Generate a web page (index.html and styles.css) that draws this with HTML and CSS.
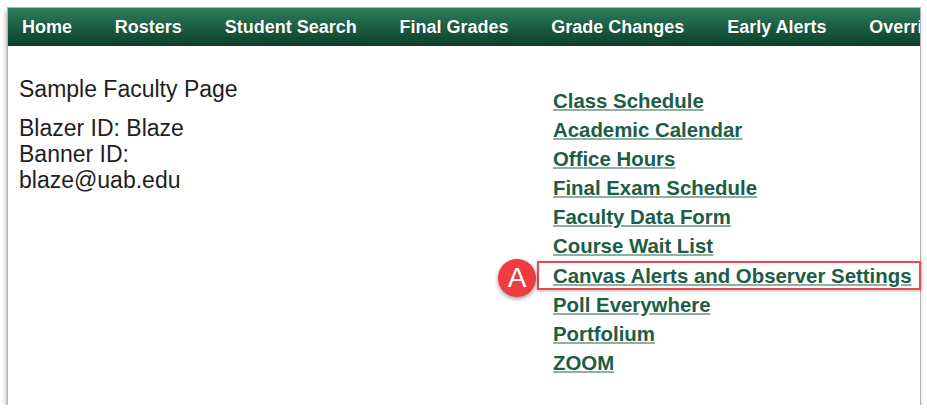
FILE: index.html
```html
<!DOCTYPE html>
<html lang="en">
<head>
  <meta charset="UTF-8" />
  <title>Sample Faculty Page</title>
  <link rel="stylesheet" href="styles.css">
</head>
<body>
  <div class="frame">
    <div class="nav">
      <a href="#">Home</a>
      <a href="#">Rosters</a>
      <a href="#">Student Search</a>
      <a href="#">Final Grades</a>
      <a href="#">Grade Changes</a>
      <a href="#">Early Alerts</a>
      <a href="#">Overrides</a>
    </div>

    <div class="content">
      <div class="profile">
        <p class="title">Sample Faculty Page</p>
        <p>Blazer ID: Blaze<br>Banner ID:<br>blaze@uab.edu</p>
      </div>

      <ul class="links">
        <li><a href="#">Class Schedule</a></li>
        <li><a href="#">Academic Calendar</a></li>
        <li><a href="#">Office Hours</a></li>
        <li><a href="#">Final Exam Schedule</a></li>
        <li><a href="#">Faculty Data Form</a></li>
        <li><a href="#">Course Wait List</a></li>
        <li><a href="#" class="marked">Canvas Alerts and Observer Settings<span class="badge">A</span></a></li>
        <li><a href="#">Poll Everywhere</a></li>
        <li><a href="#">Portfolium</a></li>
        <li><a href="#">ZOOM</a></li>
      </ul>
    </div>
  </div>
</body>
</html>
```

FILE: styles.css
```css
body {
  margin: 0;
  background: #fff;
  font-family: "Liberation Sans", Arial, sans-serif;
  overflow: hidden;
}
.frame {
  margin: 8px 7px 0 8px;
  width: 912px;
  height: 397px;
  background: #fff;
  box-shadow: 0 0 0 1px #b5b5b5, -1px 3px 5px rgba(0, 0, 0, 0.45);
}
.nav {
  height: 38px;
  display: flex;
  align-items: center;
  gap: 42.8px;
  padding-left: 14px;
  background: linear-gradient(#2c7e5d, #1a5a40 55%, #0f3e2b);
  white-space: nowrap;
  overflow: hidden;
}
.nav a {
  flex-shrink: 0;
  color: #fff;
  font-weight: bold;
  font-size: 18px;
  text-decoration: none;
  text-shadow: 0 0 1px rgba(0, 0, 0, 0.4);
}
.content {
  display: flex;
  padding-left: 11px;
}
.profile {
  width: 534px;
  color: #1e1e1e;
  font-size: 23px;
  line-height: 26px;
}
.profile p {
  margin: 0;
}
.profile .title {
  margin: 30px 0 13px;
}
.links {
  list-style: none;
  margin: 0;
  padding: 41px 0 0;
  font-size: 20.4px;
  line-height: 29.1px;
  font-weight: bold;
}
.links a {
  color: #1d5d45;
  text-decoration: underline;
  text-decoration-color: #8fb0a2;
  text-decoration-thickness: 2px;
  text-underline-offset: 1px;
}
.marked {
  position: relative;
}
.marked::after {
  content: "";
  position: absolute;
  left: -16px;
  right: -10px;
  top: -4px;
  bottom: -3px;
  border: 2px solid #ea4a4f;
  box-shadow: 0 1px 3px rgba(0, 0, 0, 0.3);
}
.badge {
  position: absolute;
  left: -55px;
  top: -6px;
  width: 38px;
  height: 38px;
  border-radius: 50%;
  background: #ef3b42;
  color: #fff;
  font-weight: normal;
  font-size: 28px;
  line-height: 38px;
  text-align: center;
  box-shadow: 0 2px 4px rgba(0, 0, 0, 0.4);
  z-index: 1;
}
```
